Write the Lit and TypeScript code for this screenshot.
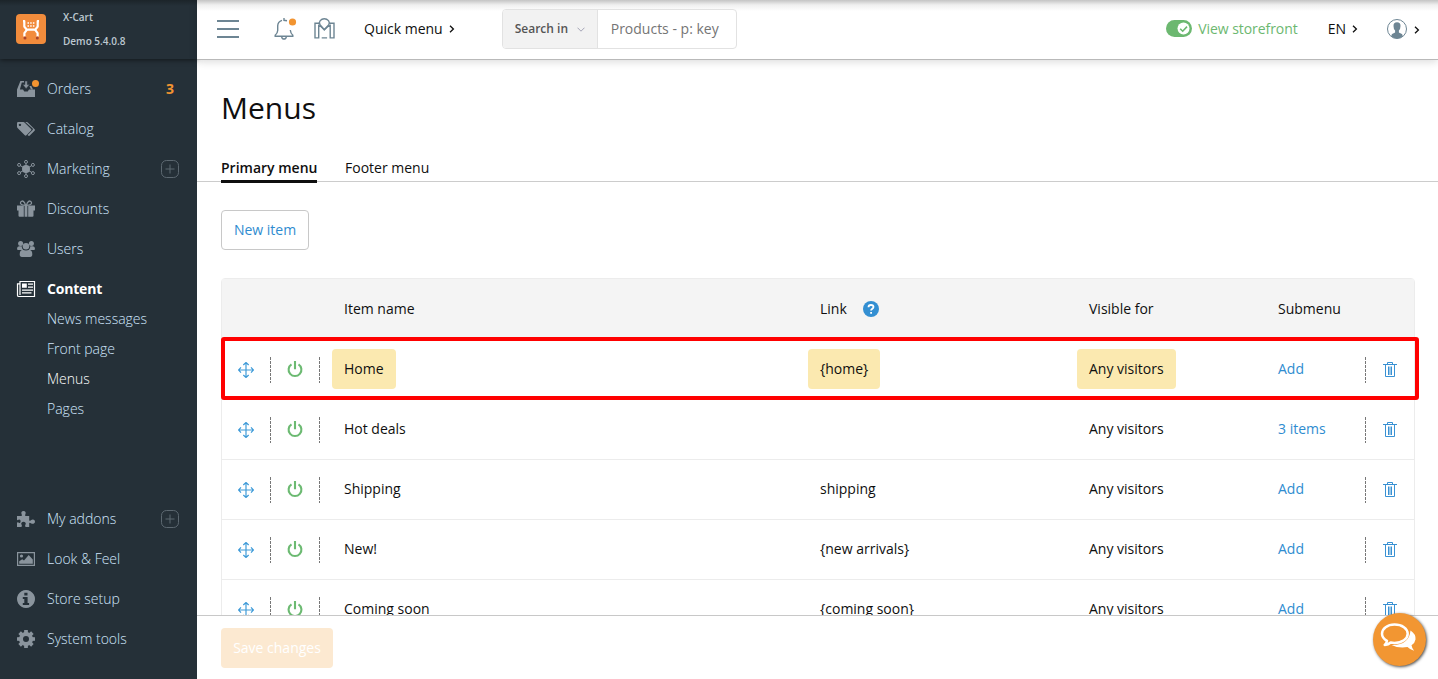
import { LitElement, html, css, svg, nothing } from "lit";
import { customElement } from "lit/decorators.js";
import { classMap } from "lit/directives/class-map.js";

interface NavItem {
  label: string;
  icon: string;
  badge?: string;
  plus?: boolean;
  dot?: boolean;
  active?: boolean;
  children?: string[];
}

interface MenuRow {
  name: string;
  link: string;
  visible: string;
  submenu: string;
  marked?: boolean;
}

const NAV_TOP: NavItem[] = [
  { label: "Orders", icon: "orders", badge: "3", dot: true },
  { label: "Catalog", icon: "catalog" },
  { label: "Marketing", icon: "marketing", plus: true },
  { label: "Discounts", icon: "discounts" },
  { label: "Users", icon: "users" },
  { label: "Content", icon: "content", active: true, children: ["News messages", "Front page", "Menus", "Pages"] },
];

const NAV_BOTTOM: NavItem[] = [
  { label: "My addons", icon: "addons", plus: true },
  { label: "Look & Feel", icon: "look" },
  { label: "Store setup", icon: "setup" },
  { label: "System tools", icon: "tools" },
];

const ROWS: MenuRow[] = [
  { name: "Home", link: "{home}", visible: "Any visitors", submenu: "Add", marked: true },
  { name: "Hot deals", link: "", visible: "Any visitors", submenu: "3 items" },
  { name: "Shipping", link: "shipping", visible: "Any visitors", submenu: "Add" },
  { name: "New!", link: "{new arrivals}", visible: "Any visitors", submenu: "Add" },
  { name: "Coming soon", link: "{coming soon}", visible: "Any visitors", submenu: "Add" },
];

const SATELLITES = [
  [9, 1.9], [2.1, 4.9], [15.9, 4.9], [2.1, 13.1], [15.9, 13.1], [9, 16.1],
];
const TEETH = [0, 45, 90, 135, 180, 225, 270, 315];

const ICONS: Record<string, unknown> = {
  orders: svg`
    <path d="M3.400 1H7v1.500H4.800L2.900 9.600H6l1.300 2h3.400l1.300-2h6V17H0V9.600z"/>
    <path d="M7.900 1h2.400v3.600h2.300L9.100 8.700 5.600 4.600h2.300z" stroke="#253038" stroke-width=".5"/>
    <path d="M12.500 6h1.800l1.800 3.600h-2.200z"/>`,
  catalog: svg`
    <path fill-rule="evenodd" d="M0 3.300Q0 2.100 1.200 2.100H6.200Q7.200 2.100 8 2.900L14.100 9Q14.900 9.800 14.100 10.600L9.400 15.300Q8.600 16.100 7.800 15.300L.8 8.300Q0 7.500 0 6.700zM2.900 3.700a1.200 1.200 0 1 0 .1 0z"/>
    <path d="M8.300 2.100h1.400q.8 0 1.600.8l6.300 6.300q.8.800 0 1.600l-4.800 4.800q-.8.800-1.700 0l-.5-.5 5-5q.7-.7 0-1.500z"/>`,
  marketing: svg`
    <circle cx="9" cy="9" r="4"/>
    ${SATELLITES.map(
      ([x, y]) => svg`<path d="M9 9L${x} ${y}" stroke="currentColor" stroke-width="1"/>
        <circle cx=${x} cy=${y} r="1.500" class="hollow"/>`,
    )}`,
  discounts: svg`
    <path d="M0 5.500h6.800V16.800H2.600Q1.500 16.800 1.500 15.700V10.500H0zM11.200 5.500H18v5h-1.500v5.200q0 1.100-1.100 1.100h-4.200zM7.600 5.500h2.800v11.300H7.600z" fill-rule="evenodd"/>
    <path d="M8.600 5.300C3.500 5.200 3 3.400 3.700 2 5.200-.2 7.600 1.500 8.600 5.300zM9.400 5.300c5.100-.1 5.600-1.900 4.900-3.300-1.500-2.200-3.900-.5-4.900 3.300z" fill="none" stroke="currentColor" stroke-width="1.300"/>`,
  users: svg`
    <circle cx="3.600" cy="3.600" r="2.500"/><circle cx="14.400" cy="3.600" r="2.500"/>
    <path d="M0 9Q0 6.300 2 6.300H4.700Q4.700 8.800 6.200 10.100H1.200Q0 10.100 0 9zM18 9q0-2.700-2-2.700h-2.700q0 2.500-1.500 3.800h5q1.200 0 1.200-1.100z"/>
    <circle cx="9" cy="6.200" r="3.300"/>
    <path d="M2.700 14.200q0-3.900 3-4.400 3.300 1.600 6.600 0 3 .5 3 4.400 0 2.700-2.200 2.700H4.900q-2.200 0-2.200-2.700z"/>`,
  content: svg`
    <path d="M3 1.500h14.500v15H1.800Q.5 16.500.5 15.200V3.800H3zM3 3.500v11.500" fill="none" stroke="currentColor" stroke-width="1.200"/>
    <path d="M5 3.500h4.800v4.300H5zM11 3.500h5v1.200h-5zM11 6.600h5v1.200h-5zM5 9.500h11v1.200H5zM5 12.300h9.500v1.200H5z"/>`,
  addons: svg`
    <path d="M0 6H4.400Q5.500 5.500 4.600 4.200 3.500 1 6.500.9q3 .1 1.900 3.300Q7.500 5.500 8.600 6h3.600v4.200q.4 1 1.700 0 1.500-1.100 3-.4 1.100.7 1.100 1.900t-1.100 1.900q-1.500.7-3-.4-1.300-1-1.700 0v3.700H8.700q-1.100-.6-.4-1.800.9-1.400.2-2.400-.8-.9-2-.9t-2 .9q-.7 1 .2 2.400.7 1.200-.4 1.800H0v-4.200q.6-.9 1.400-.1 1.200.7 1.900-.2.700-1.200 0-2.400-.7-.9-1.900-.2-.8.800-1.400-.1z"/>`,
  look: svg`
    <path d="M.6 2.600h16.800v12.800H.6z" fill="none" stroke="currentColor" stroke-width="1.200"/>
    <circle cx="4.500" cy="6" r="1.600"/>
    <path d="M2.200 13.800v-2.600l3-2 1.800 1.300L11.700 5l4.100 4.500v4.300z"/>`,
  setup: svg`
    <path fill-rule="evenodd" d="M9 0a9 9 0 1 0 .01 0zM7.300 2.700h3.200v2.700H7.300zM5.800 7h4.800v6h1.500v1.900H5.800V13h1.500V8.900H5.800z"/>`,
  tools: svg`
    ${TEETH.map((a) => svg`<path d="M7 4.200L7.200 0h3.600l.2 4.200z" transform="rotate(${a} 9 9)"/>`)}
    <circle cx="9" cy="9" r="5" fill="none" stroke="currentColor" stroke-width="4"/>`,
};

const chevron = html`<svg class="chev" viewBox="0 0 6 8" width="6" height="8">
  <path d="M1 .7l3.400 3.300L1 7.300" fill="none" stroke="currentColor" stroke-width="1.300" /></svg>`;

@customElement("side-nav")
class SideNav extends LitElement {
  static styles = css`
    :host {
      display: flex;
      flex-direction: column;
      width: 197px;
      flex: none;
      background: #253038;
      color: #d0e6fc;
      font: 14px/20px "Open Sans", sans-serif;
    }
    .brand {
      display: flex;
      box-sizing: border-box;
      height: 59px;
      padding: 5px 16px 0;
      gap: 17px;
      flex: none;
      background: linear-gradient(#1c2429, #253038 6px);
      box-shadow: 0 1px 5px rgba(0, 0, 0, 0.55);
      color: #bdc8d1;
      font-size: 10px;
      font-weight: 600;
      line-height: 24px;
    }
    .logo {
      margin-top: 9px;
    }
    .nav {
      display: flex;
      flex-direction: column;
      padding-top: 10px;
    }
    .bottom {
      margin-top: auto;
      padding-bottom: 20px;
    }
    .item {
      display: flex;
      align-items: center;
      height: 40px;
      padding: 0 18px 0 17px;
      font-weight: 300;
    }
    .icon {
      color: #8a949d;
      fill: currentColor;
      margin-right: 12px;
      overflow: visible;
    }
    .hollow {
      fill: #253038;
      stroke: currentColor;
      stroke-width: 1;
    }
    .dot {
      fill: #f29431;
    }
    .label {
      flex: 1;
    }
    .active {
      color: #fff;
      font-weight: 700;
      letter-spacing: -0.2px;
    }
    .active .icon {
      color: #fff;
    }
    .badge {
      color: #f29431;
      font-weight: 700;
      padding-right: 5px;
    }
    .plus {
      color: #5c6871;
    }
    .children {
      margin-top: -5px;
    }
    .child {
      height: 30px;
      line-height: 30px;
      padding-left: 47px;
      font-weight: 300;
    }
    .current {
      color: #fff;
    }
  `;

  private item(i: NavItem) {
    return html`
      <div class=${classMap({ item: true, active: !!i.active })}>
        <svg class="icon" width="18" height="18" viewBox="0 0 18 18">
          ${ICONS[i.icon]}
          ${i.dot ? svg`<circle class="dot" cx="18.500" cy="3.500" r="3.500"/>` : nothing}
        </svg>
        <span class="label">${i.label}</span>
        ${i.badge ? html`<span class="badge">${i.badge}</span>` : nothing}
        ${i.plus
          ? html`<svg class="plus" width="18" height="18" viewBox="0 0 18 18" fill="none" stroke="currentColor">
              <rect x=".5" y=".5" width="17" height="17" rx="5" />
              <path d="M9 4.500v9M4.500 9h9" />
            </svg>`
          : nothing}
      </div>
      ${i.children
        ? html`<div class="children">
            ${i.children.map((c) => html`<div class=${classMap({ child: true, current: c === "Menus" })}>${c}</div>`)}
          </div>`
        : nothing}
    `;
  }

  render() {
    return html`
      <div class="brand">
        <svg class="logo" width="30" height="30" viewBox="0 0 30 30">
          <rect width="30" height="30" rx="4" fill="#f28c3c" />
          <g fill="none" stroke="#fff" stroke-width="2.200" stroke-linejoin="round">
            <path d="M7 7.200h1.300v5.300l2.400 3.200h8.600l2.400-3.200V7.200H23" />
            <path d="M11 15.700l-2.600 3.400v3.400M19 15.700l2.600 3.400v3.400" />
          </g>
          <path d="M11.500 9h7.500M11.500 12h7.500" stroke="#fff" stroke-width="1.600" stroke-dasharray="1.500 1.200" />
          <circle cx="9" cy="24" r="1.500" fill="#a8452c" /><circle cx="21.300" cy="24" r="1.500" fill="#a8452c" />
        </svg>
        <div><div>X-Cart</div><div>Demo 5.4.0.8</div></div>
      </div>
      <div class="nav">${NAV_TOP.map((i) => this.item(i))}</div>
      <div class="nav bottom">${NAV_BOTTOM.map((i) => this.item(i))}</div>
    `;
  }
}

@customElement("top-bar")
class TopBar extends LitElement {
  static styles = css`
    :host {
      display: flex;
      align-items: center;
      box-sizing: border-box;
      height: 60px;
      flex: none;
      padding: 0 18px 2px 20px;
      border-bottom: 1px solid #b9b9b9;
      background: linear-gradient(#c4c4c4, #f0f0f0 5px, #fff 11px);
      box-shadow: 0 2px 8px rgba(0, 0, 0, 0.14);
      color: #0f0f0f;
      font: 14px/20px "Open Sans", sans-serif;
    }
    .line-icon {
      fill: none;
      stroke: #6d8593;
      overflow: visible;
    }
    .bell {
      margin-left: 35px;
    }
    .map {
      margin-left: 20px;
    }
    .quick {
      margin-left: 29px;
    }
    .chev {
      margin: 1px 0 0 6px;
    }
    .search {
      display: flex;
      box-sizing: border-box;
      width: 235px;
      height: 40px;
      margin-left: 47px;
      border: 1px solid #e2e2e2;
      border-radius: 4px;
      line-height: 38px;
      overflow: hidden;
      color: #757575;
      background: #fff;
    }
    .scope {
      display: flex;
      align-items: center;
      box-sizing: border-box;
      width: 95px;
      padding-left: 12px;
      background: #f2f2f2;
      border-right: 1px solid #e2e2e2;
      color: #555;
      font-size: 12px;
      font-weight: 600;
    }
    .scope-arrow {
      margin: 2px 0 0 9px;
    }
    .query {
      padding-left: 13px;
    }
    .store {
      display: flex;
      align-items: center;
      margin-left: auto;
      gap: 6px;
      color: #6cb870;
    }
    .store-label {
      letter-spacing: -0.06px;
    }
    .lang {
      margin-left: 30px;
    }
    .user {
      display: flex;
      align-items: center;
      margin-left: 29px;
    }
    .user .chev {
      margin: 2px 0 0 7px;
    }
  `;

  render() {
    return html`
      <svg class="line-icon" width="22" height="18" viewBox="0 0 22 18" stroke-width="2"><path d="M0 1h22M0 9h22M0 17h22" /></svg>
      <svg class="line-icon bell" width="20" height="22" viewBox="0 0 20 22" stroke-width="1.400">
        <path d="M8 2.300Q3.800 3.600 3.700 8V12.500Q3.500 15.500 1.200 17.200V18.300H18.800V17.200Q16.600 15.500 16.300 12M10 0v2.300l3 .5M7.700 18.800Q8 21 10 21t2.300-2.200" />
        <circle cx="18.500" cy="4" r="3.600" fill="#f29431" stroke="none" />
      </svg>
      <svg class="line-icon map" width="21" height="21" viewBox="0 0 21 21" stroke-width="1.400">
        <path d="M5 5.200H1v14.700h3.700V7.500L7.500 9l2.800 2.800L13.300 9l2.900-1.500v12.400H20V5.200h-4.200" />
        <path d="M10.300 11.800L6 6.800Q4.700 4.500 6.200 2.600 7.800.7 10.300.7t4.200 1.900q1.500 1.900.3 4.200zM7.700 19.900h5.400" />
      </svg>
      <span class="quick">Quick menu</span>${chevron}
      <div class="search">
        <div class="scope">
          Search in
          <svg class="scope-arrow" width="8" height="5" viewBox="0 0 8 5"><path d="M.5.700L4 4.200 7.500.7" fill="none" stroke="#a3a3b5" /></svg>
        </div>
        <div class="query">Products - p: key</div>
      </div>
      <div class="store">
        <svg width="26" height="17" viewBox="0 0 26 17">
          <rect width="26" height="17" rx="8.500" fill="#6cb870" />
          <circle cx="17.500" cy="8.500" r="6" fill="#fff" />
          <path d="M14.200 8.700l2.500 2.500 4.300-4.600" fill="none" stroke="#6cb870" stroke-width="1.600" />
        </svg>
        <span class="store-label">View storefront</span>
      </div>
      <span class="lang">EN</span>${chevron}
      <div class="user">
        <svg width="20" height="20" viewBox="0 0 20 20">
          <circle cx="10" cy="10" r="9.500" fill="#fff" stroke="#6d8593" />
          <path d="M10 3.200q3.600 0 3.500 3.700 0 2.900-1.600 4.700v1.800l3 1.500q1 .8.700 2.300Q13.500 19.500 10 19.500t-5.600-2.300q-.3-1.500.7-2.300l3-1.500v-1.800Q6.500 9.800 6.500 6.900 6.400 3.200 10 3.200z" fill="#6d8593" />
        </svg>
        ${chevron}
      </div>
    `;
  }
}

@customElement("menu-table")
class MenuTable extends LitElement {
  static styles = css`
    :host {
      display: block;
      position: relative;
      box-sizing: border-box;
      border: 1px solid #ececec;
      border-radius: 4px 4px 0 0;
    }
    .row {
      display: grid;
      grid-template-columns: 49px 49px 476px 269px 189px 112px 1fr;
      align-items: center;
      height: 60px;
      box-sizing: border-box;
      border-bottom: 1px solid #ececec;
    }
    .head {
      height: 61px;
      background: #f4f4f4;
      border-bottom: 0;
      padding-bottom: 1px;
    }
    .cell {
      display: flex;
      align-items: center;
      height: 40px;
      margin-top: -2px;
      padding-left: 12px;
    }
    .head .cell {
      margin-top: 0;
    }
    .value {
      padding: 0 12px;
      line-height: 40px;
      border-radius: 4px;
    }
    .marked .value {
      background: #fbe9b0;
    }
    .tool {
      display: flex;
      align-items: center;
      justify-content: center;
      height: 26px;
    }
    .tool.rule {
      padding-right: 1px;
    }
    .rule {
      box-sizing: border-box;
      height: 26px;
      background: repeating-linear-gradient(#777 0 3px, transparent 3px 4px) right / 1px 100% no-repeat;
    }
    .submenu {
      margin-top: 0;
      padding-bottom: 2px;
      color: #2f8cd0;
    }
    .marked .submenu .value {
      background: none;
    }
    .help {
      margin-left: 4px;
    }
    .frame {
      position: absolute;
      left: -1px;
      top: 58px;
      width: 1190px;
      height: 55px;
      border: 4px solid #f00;
      border-radius: 3px;
    }
  `;

  render() {
    return html`
      <div class="row head">
        <span></span><span></span>
        <div class="cell"><span class="value">Item name</span></div>
        <div class="cell">
          <span class="value">Link</span>
          <svg class="help" width="16" height="16" viewBox="0 0 16 16">
            <circle cx="8" cy="8" r="8" fill="#338fd2" />
            <path d="M5.500 6.300Q5.500 4 8 4t2.500 2.100Q10.500 7.300 8.900 8.100 8.100 8.500 8.100 9.600M8.100 11v1.700" fill="none" stroke="#fff" stroke-width="1.800" />
          </svg>
        </div>
        <div class="cell"><span class="value">Visible for</span></div>
        <div class="cell"><span class="value">Submenu</span></div>
        <span></span>
      </div>
      ${ROWS.map(
        (r) => html`
          <div class=${classMap({ row: true, marked: !!r.marked })}>
            <div class="tool rule">
              <svg width="16" height="16" viewBox="0 0 16 16" fill="none" stroke="#3f9bd8" stroke-width="1.200">
                <path d="M8 .5v15M.5 8h15M5.300 3L8 .5 10.700 3M5.300 13L8 15.500 10.700 13M3 5.300L.5 8 3 10.700M13 5.300L15.500 8 13 10.700" />
              </svg>
            </div>
            <div class="tool rule">
              <svg width="16" height="17" viewBox="0 0 16 17" fill="none" stroke="#6cba72" stroke-width="2.100">
                <path d="M4.500 3.300A6.400 6.400 0 1 0 11.500 3.300M8 0v8.300" />
              </svg>
            </div>
            <div class="cell"><span class="value">${r.name}</span></div>
            <div class="cell">${r.link ? html`<span class="value">${r.link}</span>` : nothing}</div>
            <div class="cell"><span class="value">${r.visible}</span></div>
            <div class="cell rule submenu"><span class="value">${r.submenu}</span></div>
            <div class="tool">
              <svg width="14" height="15" viewBox="0 0 14 15" fill="none" stroke="#3991d3">
                <path d="M0 2.500h14M4.500 2.500v-2h5v2M2.500 3v11.500h9V3M5.500 4.500v8.500M7 4.500v8.500M8.500 4.500v8.500" />
              </svg>
            </div>
          </div>
        `,
      )}
      <div class="frame"></div>
    `;
  }
}

@customElement("app-root")
class AppRoot extends LitElement {
  static styles = css`
    :host {
      display: flex;
      position: relative;
      height: 679px;
      overflow: hidden;
      background: #fff;
      color: #0f0f0f;
      font: 14px/20px "Open Sans", sans-serif;
    }
    .main {
      display: flex;
      flex-direction: column;
      flex: 1;
      min-width: 0;
    }
    .body {
      flex: 1;
      min-height: 0;
      overflow: hidden;
    }
    .title {
      margin: 0;
      padding: 28px 24px 0;
      font-size: 30px;
      font-weight: 400;
      line-height: 40px;
    }
    .tabs {
      display: flex;
      gap: 28px;
      height: 27px;
      margin-top: 26px;
      padding: 0 24px;
      line-height: 28px;
      border-bottom: 1px solid #ccc;
    }
    .tab {
      height: 26px;
    }
    .selected {
      font-weight: 600;
      width: 96px;
      white-space: nowrap;
      border-bottom: 3px solid #0f0f0f;
    }
    .create {
      box-sizing: border-box;
      display: block;
      width: 88px;
      height: 40px;
      margin: 28px 24px;
      padding: 0;
      border: 1px solid #c8c8c8;
      border-radius: 4px;
      background: #fff;
      color: #2f8cd0;
      font: inherit;
    }
    .table {
      margin: 0 23px 0 24px;
    }
    .footer {
      box-sizing: border-box;
      height: 64px;
      padding: 12px 24px;
      border-top: 1px solid #c8c8c8;
      background: #fff;
    }
    .save {
      width: 112px;
      height: 40px;
      padding: 0;
      border: 0;
      border-radius: 4px;
      background: #fce9d1;
      color: #fff;
      font: inherit;
    }
    .chat {
      position: absolute;
      right: 12px;
      bottom: 13px;
      width: 53px;
      height: 53px;
      border-radius: 50%;
      background: #f29632;
      box-shadow: 1px 1px 3px rgba(0, 0, 0, 0.7);
    }
  `;

  render() {
    return html`
      <side-nav></side-nav>
      <div class="main">
        <top-bar></top-bar>
        <div class="body">
          <h1 class="title">Menus</h1>
          <div class="tabs">
            <span class="tab selected">Primary menu</span>
            <span class="tab">Footer menu</span>
          </div>
          <button class="create">New item</button>
          <menu-table class="table"></menu-table>
        </div>
        <div class="footer"><button class="save">Save changes</button></div>
      </div>
      <div class="chat">
        <svg width="53" height="53" viewBox="0 0 53 53">
          <path d="M37.500 17.500Q43 21 42.500 26.500 42 30 38.500 32.200q.3 2.500 2.600 5.500-4-.8-6.600-3.600-9 1.500-16-2.200Q36 32.500 37.500 17.500z" fill="#fff" />
          <path d="M21.500 11.500c7.500 0 13.200 4 13.200 9.200s-5.700 9.200-13.200 9.200q-2 0-3.800-.4-2.400 2.200-6 2.500 2-1.800 2.300-4.200-5-2.800-5-7.100c0-5.200 5.500-9.200 12.500-9.200z" fill="none" stroke="#fff" stroke-width="2.500" stroke-linejoin="round" />
        </svg>
      </div>
    `;
  }
}
